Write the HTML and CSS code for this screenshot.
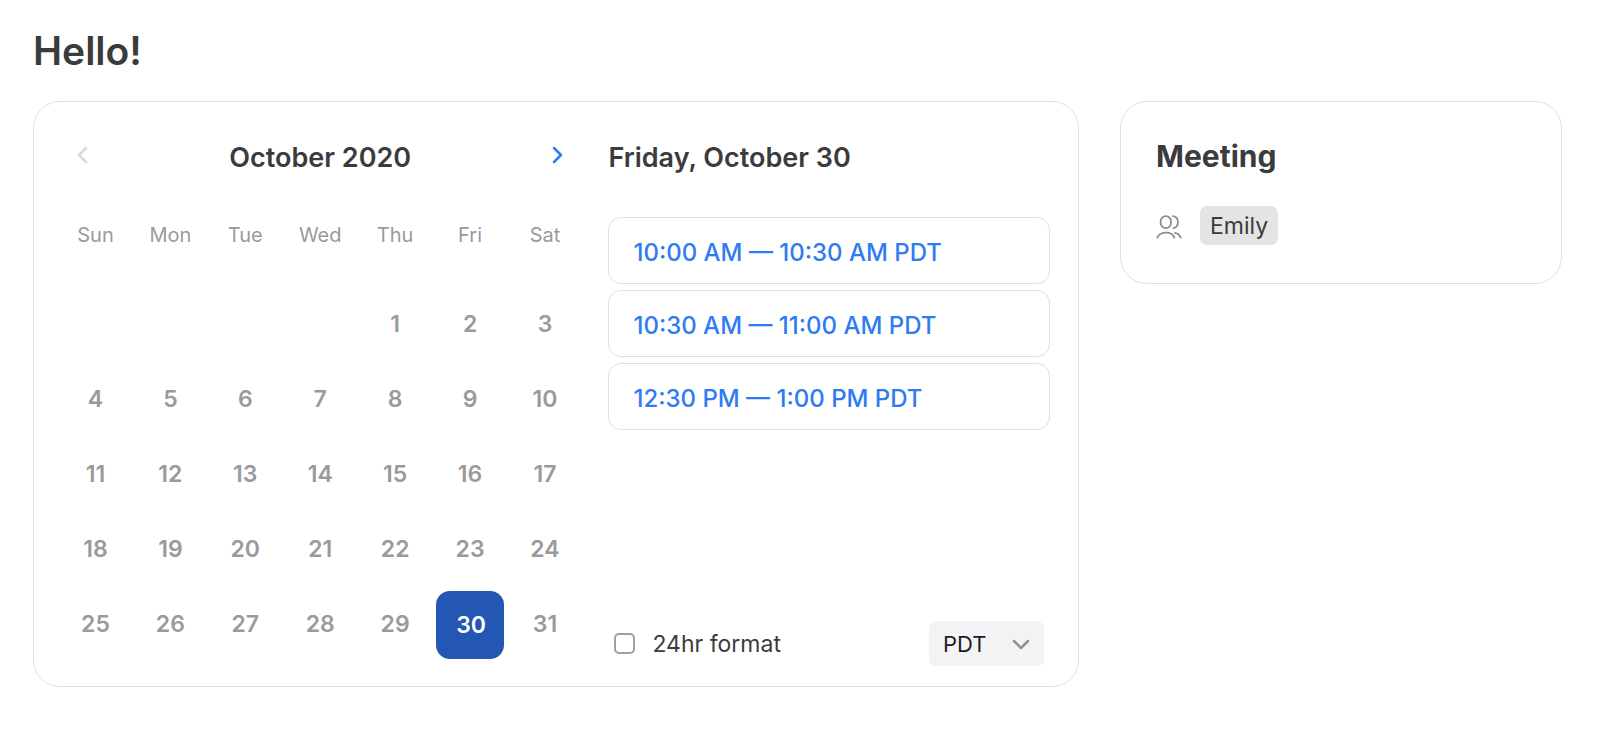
FILE: index.html
```html
<!DOCTYPE html>
<html lang="en">
<head>
    <meta charset="UTF-8">
    <meta name="viewport" content="width=device-width, initial-scale=1.0">
    <title>Book a meeting</title>
    <link rel="stylesheet" href="styles.css">
</head>
<body>
    <h1 class="page-title">Hello!</h1>

    <main class="layout">
        <section class="card scheduler">
            <div class="calendar">
                <div class="calendar-header">
                    <button type="button" class="nav-button" aria-label="Previous month" disabled>
                        <svg width="12" height="20" viewBox="0 0 12 20"><path d="M10 3 3 10l7 7"/></svg>
                    </button>
                    <h2>October 2020</h2>
                    <button type="button" class="nav-button" aria-label="Next month">
                        <svg width="12" height="20" viewBox="0 0 12 20"><path d="M2 3l7 7-7 7"/></svg>
                    </button>
                </div>
                <table class="month">
                    <thead>
                        <tr><th>Sun</th><th>Mon</th><th>Tue</th><th>Wed</th><th>Thu</th><th>Fri</th><th>Sat</th></tr>
                    </thead>
                    <tbody>
                        <tr>
                            <td></td><td></td><td></td><td></td>
                            <td><button type="button" disabled>1</button></td>
                            <td><button type="button" disabled>2</button></td>
                            <td><button type="button" disabled>3</button></td>
                        </tr>
                        <tr>
                            <td><button type="button" disabled>4</button></td>
                            <td><button type="button" disabled>5</button></td>
                            <td><button type="button" disabled>6</button></td>
                            <td><button type="button" disabled>7</button></td>
                            <td><button type="button" disabled>8</button></td>
                            <td><button type="button" disabled>9</button></td>
                            <td><button type="button" disabled>10</button></td>
                        </tr>
                        <tr>
                            <td><button type="button" disabled>11</button></td>
                            <td><button type="button" disabled>12</button></td>
                            <td><button type="button" disabled>13</button></td>
                            <td><button type="button" disabled>14</button></td>
                            <td><button type="button" disabled>15</button></td>
                            <td><button type="button" disabled>16</button></td>
                            <td><button type="button" disabled>17</button></td>
                        </tr>
                        <tr>
                            <td><button type="button" disabled>18</button></td>
                            <td><button type="button" disabled>19</button></td>
                            <td><button type="button" disabled>20</button></td>
                            <td><button type="button" disabled>21</button></td>
                            <td><button type="button" disabled>22</button></td>
                            <td><button type="button" disabled>23</button></td>
                            <td><button type="button" disabled>24</button></td>
                        </tr>
                        <tr>
                            <td><button type="button" disabled>25</button></td>
                            <td><button type="button" disabled>26</button></td>
                            <td><button type="button" disabled>27</button></td>
                            <td><button type="button" disabled>28</button></td>
                            <td><button type="button" disabled>29</button></td>
                            <td><button type="button" class="selected" aria-pressed="true">30</button></td>
                            <td><button type="button" disabled>31</button></td>
                        </tr>
                    </tbody>
                </table>
            </div>

            <div class="times">
                <h2>Friday, October 30</h2>
                <div class="slots">
                    <button type="button" class="slot">10:00 AM — 10:30 AM PDT</button>
                    <button type="button" class="slot">10:30 AM — 11:00 AM PDT</button>
                    <button type="button" class="slot">12:30 PM — 1:00 PM PDT</button>
                </div>
                <div class="options">
                    <label class="format" for="format24">
                        <input type="checkbox" id="format24">
                        24hr format
                    </label>
                    <div class="zone">
                        <select id="timezone" aria-label="Time zone">
                            <option>PDT</option>
                        </select>
                        <svg width="18" height="12" viewBox="0 0 18 12"><path d="M2 3l7 7 7-7"/></svg>
                    </div>
                </div>
            </div>
        </section>

        <aside class="card meeting">
            <h2>Meeting</h2>
            <div class="people">
                <svg width="26" height="26" viewBox="0 0 26 26">
                    <rect x="4.6" y="3.2" width="10.4" height="12" rx="5.2"/>
                    <path d="M17 3.2c3.2.3 4.9 2.8 4.9 5.9s-1.700 5.6-4.5 6.1"/>
                    <path d="M1.2 24.6c1.7-3.6 4.5-5 8.8-5s7.1 1.4 8.4 5"/>
                    <path d="M18.9 19.8c2.8.5 4.8 2.1 5.8 4.8"/>
                </svg>
                <span class="person">Emily</span>
            </div>
        </aside>
    </main>
</body>
</html>
```
FILE: styles.css
```css
* {
    box-sizing: border-box;
}

body {
    font-family: Inter, "Liberation Sans", sans-serif;
    margin: 0;
    padding: 26px 38px 52px 33px;
    background-color: #fff;
    color: #3b3b3d;
}

h1, h2 {
    margin: 0;
    font-weight: 600;
}

button, select, input {
    font: inherit;
    margin: 0;
}

button {
    border: none;
    padding: 0;
    background: none;
}

svg {
    display: block;
    fill: none;
    stroke: currentColor;
    stroke-linecap: round;
    stroke-linejoin: round;
}

.page-title {
    font-size: 39px;
    line-height: 50px;
    margin-bottom: 25px;
}

.layout {
    display: grid;
    grid-template-columns: 1046fr 442fr;
    gap: 41px;
    align-items: start;
}

.card {
    border: 1px solid #dfe0e6;
    border-radius: 27px;
}

.scheduler {
    display: grid;
    grid-template-columns: 525fr 442fr;
    gap: 26px;
    padding: 0 28px 24px 24px;
}

.scheduler h2 {
    font-size: 27px;
    line-height: 30px;
}

/* Calendar */

.calendar-header {
    display: flex;
    justify-content: space-between;
    align-items: center;
    height: 96px;
    padding: 16px 10px 0;
}

.nav-button {
    padding: 0 8px 6px;
    color: #2f7bf2;
    stroke-width: 2.5;
    cursor: pointer;
}

.nav-button:disabled {
    color: #d9d9d9;
}

.month {
    width: 100%;
    table-layout: fixed;
    border-collapse: collapse;
    text-align: center;
}

.month th {
    height: 89px;
    padding: 0 0 16px;
    font-size: 20px;
    font-weight: 400;
    color: #9a9a9c;
}

.month td {
    height: 75px;
    padding: 0;
}

.month button {
    display: block;
    width: 68px;
    height: 68px;
    margin: 0 auto;
    padding-bottom: 2px;
    border-radius: 14px;
    font-size: 23px;
    font-weight: 600;
    color: #9a9a9c;
}

.month .selected {
    padding: 0 0 0 2px;
    background-color: #2457b3;
    color: #fff;
    cursor: pointer;
}

/* Time slots */

.times {
    display: flex;
    flex-direction: column;
}

.times h2 {
    padding: 41px 0 44px;
}

.slots {
    display: flex;
    flex-direction: column;
    gap: 6px;
}

.slot {
    height: 67px;
    padding: 4px 24px 0;
    border: 1px solid #dfe0e6;
    border-radius: 13px;
    font-size: 24px;
    font-weight: 500;
    text-align: left;
    color: #2f7bf2;
    cursor: pointer;
}

.options {
    display: flex;
    justify-content: space-between;
    align-items: center;
    margin-top: auto;
    padding: 0 6px;
    margin-bottom: -4px;
}

.format {
    display: flex;
    align-items: center;
    gap: 17px;
    font-size: 23px;
}

.format input {
    appearance: none;
    width: 21px;
    height: 21px;
    border: 2px solid #a0a0a2;
    border-radius: 5px;
}

.format input:checked {
    background-color: #2457b3;
}

.zone {
    position: relative;
}

.zone select {
    appearance: none;
    width: 115px;
    height: 45px;
    padding: 0 14px;
    border: none;
    border-radius: 7px;
    background-color: #f2f3f5;
    color: #1c1c1e;
    font-size: 22px;
}

.zone svg {
    position: absolute;
    right: 14px;
    top: 17px;
    color: #929294;
    stroke-width: 2.5;
    pointer-events: none;
}

/* Meeting details */

.meeting {
    padding: 35px 35px 38px;
}

.meeting h2 {
    font-size: 30px;
    line-height: 38px;
    font-weight: 700;
    margin-bottom: 31px;
}

.people {
    display: flex;
    align-items: center;
    gap: 18px;
}

.people svg {
    color: #8e8e90;
    stroke-width: 1.8;
}

.person {
    padding: 1px 10px 0;
    border-radius: 7px;
    background-color: #e4e4e4;
    font-size: 23px;
    line-height: 38px;
}
```
